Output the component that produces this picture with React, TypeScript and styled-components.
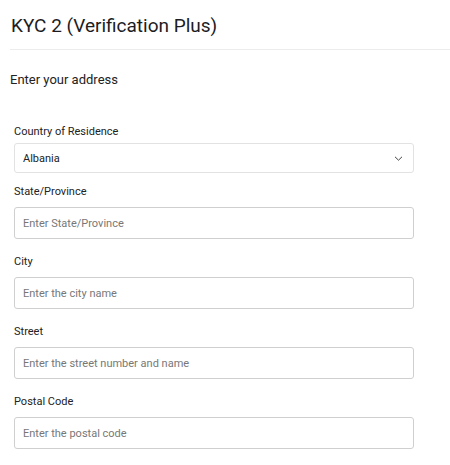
import React from "react";
import styled, { createGlobalStyle } from "styled-components";

const Global = createGlobalStyle`
  html, body { margin: 0; padding: 0; background: #fff; }
  body { font-family: Roboto, "Open Sans", Arial, sans-serif; color: #1d1d1f; }
  * { box-sizing: border-box; }
`;

const Page = styled.div`
  width: 450px;
  padding: 13px 0 0 10px;
`;

const Title = styled.h2`
  margin: 0 0 0 1px;
  font-size: 19px;
  line-height: 25px;
  font-weight: 400;
  color: #1d1d1f;
`;

const Divider = styled.hr`
  margin: 11px 0 0 0;
  border: none;
  border-top: 1px solid #ececec;
`;

const Subtitle = styled.p`
  margin: 22px 0 0 0;
  font-size: 13px;
  line-height: 16px;
  color: #222;
`;

const Form = styled.form`
  display: flex;
  flex-direction: column;
  width: 400px;
  margin: 37px 0 0 4px;
`;

const Field = styled.div`
  display: flex;
  flex-direction: column;
`;

const Label = styled.label<{ $gap: number }>`
  font-size: 11px;
  line-height: 14px;
  color: #222;
  margin-bottom: ${(p) => p.$gap}px;
`;

const SelectBox = styled.div`
  height: 30px;
  border: 1px solid #e2e2e2;
  border-radius: 3px;
  display: flex;
  align-items: center;
  justify-content: space-between;
  padding: 0 10px 0 8px;
  font-size: 11px;
  color: #222;
  margin-bottom: 12px;
`;

const Input = styled.input`
  height: 32px;
  border: 1px solid #cfcfcf;
  border-radius: 3px;
  padding: 0 8px;
  font-family: inherit;
  font-size: 11px;
  color: #222;
  outline: none;
  margin-bottom: 16px;
  &::placeholder { color: #777; }
`;

const Chevron = () => (
  <svg width="9" height="5" viewBox="0 0 9 5" fill="none">
    <path d="M1 0.8l3.5 3.4L8 0.8" stroke="#444" strokeWidth="1" />
  </svg>
);

const fields = [
  { label: "State/Province", placeholder: "Enter State/Province" },
  { label: "City", placeholder: "Enter the city name" },
  { label: "Street", placeholder: "Enter the street number and name" },
  { label: "Postal Code", placeholder: "Enter the postal code" },
];

export default function App() {
  return (
    <Page>
      <Global />
      <Title>KYC 2 (Verification Plus)</Title>
      <Divider />
      <Subtitle>Enter your address</Subtitle>
      <Form onSubmit={(e) => e.preventDefault()}>
        <Field>
          <Label $gap={4}>Country of Residence</Label>
          <SelectBox>
            <span>Albania</span>
            <Chevron />
          </SelectBox>
        </Field>
        {fields.map((f) => (
          <Field key={f.label}>
            <Label $gap={8}>{f.label}</Label>
            <Input placeholder={f.placeholder} />
          </Field>
        ))}
      </Form>
    </Page>
  );
}
